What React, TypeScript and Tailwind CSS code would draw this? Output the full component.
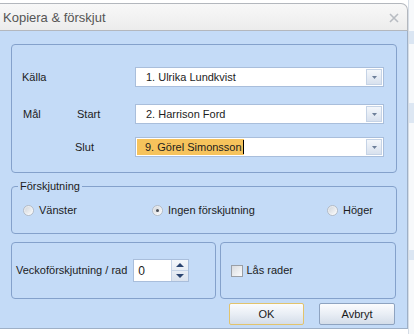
import { ReactNode } from 'react';

const FONT = "font-['Liberation_Sans',Arial,sans-serif]";

function ComboBox({ value, selected }: { value: string; selected?: boolean }) {
  return (
    <div className="flex h-[20px] w-[249px] items-center border border-[#a9bedb] bg-white">
      <div className="flex h-full flex-1 items-center pl-[1px]">
        {selected ? (
          <div className="flex h-[16px] items-center bg-[#f6c35c] pl-[8px]">
            <span className="leading-none">{value}</span>
            <span className="ml-[1px] h-[14px] w-[1px] bg-black" />
          </div>
        ) : (
          <span className="pl-[9px] leading-none">{value}</span>
        )}
      </div>
      <div className="mr-[1px] flex h-[16px] w-[16px] items-center justify-center border border-[#c5d3e6] bg-gradient-to-b from-[#f4f7fb] to-[#d8e1ee]">
        <svg width="5" height="3" viewBox="0 0 5 3">
          <path d="M0 0h5L2.5 3z" fill="#6d7f99" />
        </svg>
      </div>
    </div>
  );
}

function Radio({ label, checked }: { label: string; checked?: boolean }) {
  return (
    <div className="flex items-center gap-[5px]">
      <span className="flex h-[11px] w-[11px] items-center justify-center rounded-full border border-[#b4bcc6] bg-gradient-to-br from-[#e2e5e9] to-[#ffffff]">
        <span className="flex h-[7px] w-[7px] items-center justify-center rounded-full bg-gradient-to-br from-[#d3d7dc] to-[#f7f8f9]">
          {checked && <span className="h-[3px] w-[3px] rounded-full bg-[#4a4f57]" />}
        </span>
      </span>
      <span className="leading-none">{label}</span>
    </div>
  );
}

function Group({ className, children }: { className: string; children: ReactNode }) {
  return <div className={`rounded-[4px] border border-[#84a1cb] ${className}`}>{children}</div>;
}

function DialogButton({ label, focused }: { label: string; focused?: boolean }) {
  return (
    <button
      className={`flex h-[22px] items-center justify-center rounded-[2px] border bg-gradient-to-b from-[#fbfcfe] via-[#e9eef5] to-[#d4dde9] leading-none text-[#1a1a1a] ${
        focused ? 'w-[75px] border-[#e2c36c]' : 'w-[76px] border-[#8ea3c0]'
      }`}
    >
      {label}
    </button>
  );
}

export default function App() {
  return (
    <div className={`flex h-[334px] w-[414px] overflow-hidden bg-white text-[11px] text-[#1c1c1c] ${FONT}`}>
      {/* Dialogruta */}
      <div className="flex h-[329px] w-[408px] flex-col pt-[3px]">
        <div className="flex h-[28px] items-center justify-between rounded-tr-[7px] border-t border-r border-b border-[#b3b7bd] bg-gradient-to-b from-[#f8f8f8] to-[#ececec] pl-[3px] pr-[8px]">
          <span className="text-[13px] leading-none text-[#555]">Kopiera &amp; förskjut</span>
          <svg width="10" height="10" viewBox="0 0 10 10" className="mt-[2px]">
            <path d="M1 1l8 8M9 1l-8 8" stroke="#b8bcc2" strokeWidth="1.6" />
          </svg>
        </div>

        <div className="flex flex-1 flex-col border-r border-b border-[#9eb0c7] bg-[#c4dbf7] px-[11px] pt-[13px]">
          {/* Källa / Mål */}
          <Group className="h-[129px] w-[386px] pl-[10px] pt-[22px]">
            <div className="flex items-center">
              <span className="w-[113px] leading-none">Källa</span>
              <ComboBox value="1. Ulrika Lundkvist" />
            </div>
            <div className="mt-[17px] flex items-center">
              <div className="flex w-[113px] pl-[1px] leading-none">
                <span className="w-[54px]">Mål</span>
                <span>Start</span>
              </div>
              <ComboBox value="2. Harrison Ford" />
            </div>
            <div className="mt-[13px] flex items-center">
              <span className="w-[113px] pl-[53px] leading-none">Slut</span>
              <ComboBox value="9. Görel Simonsson" selected />
            </div>
          </Group>

          {/* Förskjutning */}
          <fieldset className="mt-[7px] h-[54px] w-[386px] rounded-[4px] border border-[#84a1cb]">
            <legend className="ml-[6px] px-[2px] leading-[13px]">Förskjutning</legend>
            <div className="flex items-center pl-[11px] pt-[12px]">
              <div className="w-[129px]">
                <Radio label="Vänster" />
              </div>
              <div className="w-[175px]">
                <Radio label="Ingen förskjutning" checked />
              </div>
              <Radio label="Höger" />
            </div>
          </fieldset>

          <div className="mt-[8px] flex gap-[4px]">
            <Group className="flex h-[57px] w-[206px] items-center pl-[4px]">
              <span className="leading-none">Veckoförskjutning / rad</span>
              <div className="ml-[6px] flex h-[23px] w-[56px] border border-[#a9bedb] bg-white">
                <span className="flex flex-1 items-center pl-[4px] text-[12px] leading-none">0</span>
                <div className="flex w-[17px] flex-col border-l border-[#c5d3e6] bg-gradient-to-b from-[#f4f7fb] to-[#dbe3ee]">
                  <div className="flex flex-1 items-center justify-center border-b border-[#c5d3e6]">
                    <svg width="8" height="4" viewBox="0 0 8 4">
                      <path d="M0 4L4 0l4 4z" fill="#2a4470" />
                    </svg>
                  </div>
                  <div className="flex flex-1 items-center justify-center">
                    <svg width="8" height="4" viewBox="0 0 8 4">
                      <path d="M0 0h8L4 4z" fill="#2a4470" />
                    </svg>
                  </div>
                </div>
              </div>
            </Group>
            <Group className="flex h-[57px] w-[176px] items-center gap-[3px] pl-[10px]">
              <span className="h-[12px] w-[12px] border border-[#9a9fa6] bg-gradient-to-br from-[#d9dce0] to-[#fbfbfc]" />
              <span className="leading-none">Lås rader</span>
            </Group>
          </div>

          <div className="mt-[4px] flex justify-end gap-[15px] pr-[1px]">
            <DialogButton label="OK" focused />
            <DialogButton label="Avbryt" />
          </div>
        </div>
      </div>

      {/* Bakomliggande fönster */}
      <div className="flex w-[6px] flex-col border-l border-[#d6dde6] bg-[#f7f9fb]">
        <div className="mt-[31px] h-[13px] bg-[#dbe6f3]" />
        <div className="mt-[59px] h-[20px] bg-[#dde7f3]" />
        <div className="mt-[127px] h-[10px] bg-[#dbe6f3]" />
      </div>
    </div>
  );
}
